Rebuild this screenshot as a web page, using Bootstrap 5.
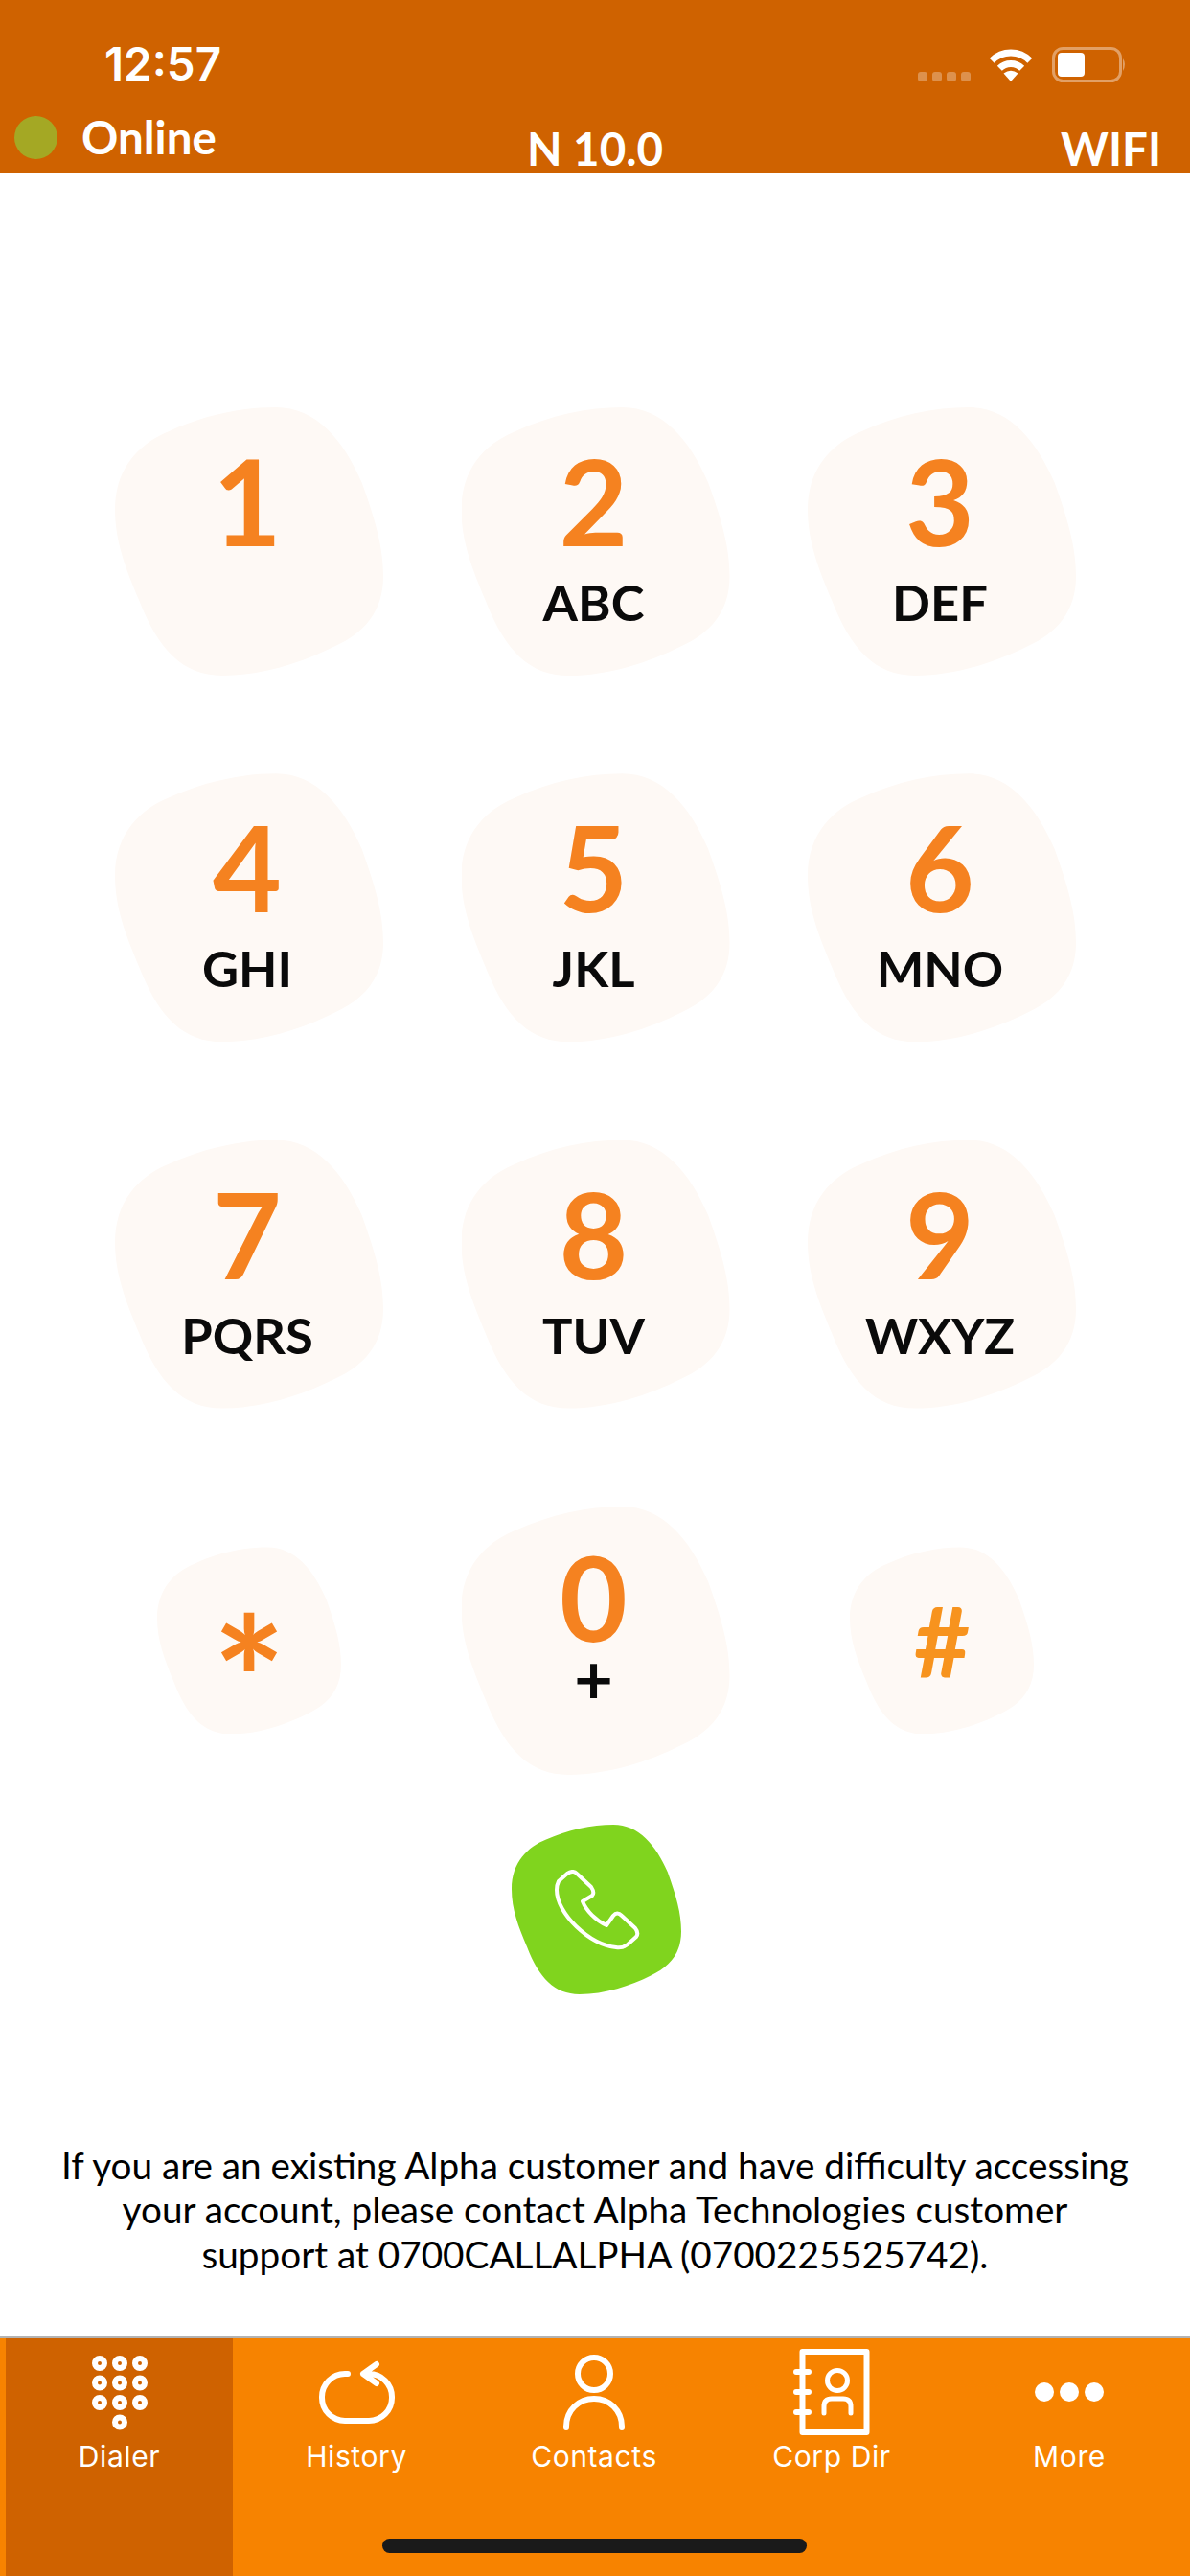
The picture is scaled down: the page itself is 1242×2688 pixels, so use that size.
<!DOCTYPE html>
<html lang="en">
<head>
  <meta charset="UTF-8" />
  <meta name="viewport" content="width=device-width, initial-scale=1.0"/>
  <title>Alpha Dialer</title>
  <link href="https://cdn.jsdelivr.net/npm/bootstrap@5.3.0/dist/css/bootstrap.min.css" rel="stylesheet">
  <style>
    body { font-family: Lato, "Liberation Sans", sans-serif; color: #000; height: 2688px; overflow: hidden; }
    .top-bar { height: 180px; background: #cf6200; color: #fff; }
    .status-row { height: 112px; padding: 44px 56px 0 109px; }
    .clock { font-family: Inter, sans-serif; font-weight: 600; font-size: 47.5px; line-height: 46px; }
    .info-row { height: 68px; padding: 0 30px 0 15px; font-size: 47.5px; font-weight: 700; line-height: 50px; }
    .info-mid { padding-left: 15px; }
    .online-dot { width: 45px; height: 45px; border-radius: 50%; background: #a4a824; margin-right: 25px; }
    .online-wrap { margin-bottom: 12px; }
    .keypad { display: grid; grid-template-columns: repeat(3, 280px); column-gap: 81.5px; row-gap: 102.3px; padding: 245px 0 0 120px; place-items: center; }
    .key { width: 280px; height: 280px; background: #fef9f5; clip-path: url(#blobShape); padding: 35px 4px 0 0; }
    .key-small { width: 192px; height: 195px; padding: 0; }
    .digit { font-size: 124px; line-height: 124px; font-weight: 700; color: #f58220; height: 124px; }
    .digit-zero { font-size: 122px; margin-top: -3px; }
    .letters { font-size: 52.5px; line-height: 52px; font-weight: 700; margin-top: 18px; color: #0a0a0a; }
    .plus-sign { font-size: 70px; line-height: 40px; margin-top: 3px; }
    .star { font-size: 180px; line-height: 180px; font-weight: 700; color: #f58220; height: 104px; }
    .hash { font-size: 101px; line-height: 100px; font-weight: 700; color: #f7931e; }
    .call-btn { width: 177px; height: 177px; background: #80d41e; clip-path: url(#blobShape); margin: 52px 0 0 534px; padding: 2px 0 0 3px; }
    .help-text { font-size: 38.7px; line-height: 46.5px; margin: 0; padding-top: 155px; }
    .tab-bar { height: 250px; background: #f78300; border-top: 2px solid #b3b3b3; padding-right: 2px; margin-top: auto; position: relative; }
    .tab-item { flex: 0 0 248px; color: #fff; padding-top: 6px; font-family: Inter, sans-serif; font-size: 30px; line-height: 36px; letter-spacing: .6px; }
    .tab-on { flex-basis: 237px; margin: 0 5px 0 6px; background: #cf6200; }
    .tab-icon { height: 100px; }
    .tab-label { margin-top: -1px; }
    .home-bar { position: absolute; left: 399px; top: 209px; width: 443px; height: 15px; border-radius: 8px; background: #1a1a1a; }
  </style>
</head>
<body class="d-flex flex-column">
  <svg width="0" height="0" class="position-absolute">
    <defs>
      <clipPath id="blobShape" clipPathUnits="objectBoundingBox">
        <path d="M.6 0C.75 0 .85 .12 .92 .28C.97 .42 1 .52 1 .63C1 .76 .93 .84 .82 .89C.7 .95 .55 1 .4 1C.25 1 .16 .9 .09 .72C.04 .6 0 .5 0 .38C0 .22 .1 .13 .2 .09C.33 .03 .47 0 .6 0Z"/>
      </clipPath>
    </defs>
  </svg>

  <header class="top-bar">
    <div class="status-row d-flex justify-content-between align-items-start">
      <span class="clock">12:57</span>
      <svg width="228" height="44" viewBox="0 0 228 44">
        <g fill="#fff" opacity=".3">
          <rect x="0" y="31" width="10" height="10" rx="3"/>
          <rect x="15" y="31" width="10" height="10" rx="3"/>
          <rect x="30" y="31" width="10" height="10" rx="3"/>
          <rect x="45" y="31" width="10" height="10" rx="3"/>
        </g>
        <g transform="translate(74,6)">
          <path d="M3.2 13.2A28 28 0 0 1 42.8 13.2M11.3 21.3A16.5 16.5 0 0 1 34.7 21.3" fill="none" stroke="#fff" stroke-width="7"/>
          <path d="M23 35L15.5 26.5Q23 21 30.5 26.5Z" fill="#fff"/>
        </g>
        <rect x="141.5" y="6.5" width="70" height="34" rx="10" fill="none" stroke="#fff" stroke-opacity=".4" stroke-width="3"/>
        <rect x="146" y="11" width="28" height="25" rx="4" fill="#fff"/>
        <path d="M214 17Q218 23 214 30Z" fill="#fff" opacity=".4"/>
      </svg>
    </div>
    <div class="info-row row g-0 align-items-end">
      <div class="col-4 d-flex align-items-center online-wrap"><span class="online-dot"></span><span>Online</span></div>
      <div class="col-4 text-center info-mid">N 10.0</div>
      <div class="col-4 text-end">WIFI</div>
    </div>
  </header>

  <main>
    <div class="keypad">
      <div class="key text-center"><div class="digit">1</div></div>
      <div class="key text-center"><div class="digit">2</div><div class="letters">ABC</div></div>
      <div class="key text-center"><div class="digit">3</div><div class="letters">DEF</div></div>
      <div class="key text-center"><div class="digit">4</div><div class="letters">GHI</div></div>
      <div class="key text-center"><div class="digit">5</div><div class="letters">JKL</div></div>
      <div class="key text-center"><div class="digit">6</div><div class="letters">MNO</div></div>
      <div class="key text-center"><div class="digit">7</div><div class="letters">PQRS</div></div>
      <div class="key text-center"><div class="digit">8</div><div class="letters">TUV</div></div>
      <div class="key text-center"><div class="digit">9</div><div class="letters">WXYZ</div></div>
      <div class="key key-small d-flex align-items-center justify-content-center"><div class="star">*</div></div>
      <div class="key text-center"><div class="digit digit-zero">0</div><div class="letters plus-sign">+</div></div>
      <div class="key key-small d-flex align-items-center justify-content-center"><div class="hash">#</div></div>
    </div>

    <div class="call-btn d-flex align-items-center justify-content-center">
      <svg width="90" height="84" viewBox="-1 -1 90 84">
        <path d="M3 11L12 3Q18 -1 22 3L37 17Q41 23 38 26L28 32C32 42 42 52 53 57L60 47Q64 42 69 47L83 60Q87 65 84 69L75 77Q70 81 63 80C35 77 1 45 1 20Q1 15 3 11Z" fill="none" stroke="#fff" stroke-width="4" stroke-linejoin="round"/>
      </svg>
    </div>

    <p class="help-text text-center">If you are an existing Alpha customer and have difficulty accessing<br>your account, please contact Alpha Technologies customer<br>support at 0700CALLALPHA (0700225525742).</p>
  </main>

  <nav class="tab-bar d-flex">
    <div class="tab-item tab-on text-center">
      <div class="tab-icon d-flex align-items-center justify-content-center">
        <svg width="70" height="80" viewBox="0 0 70 80" fill="none" stroke="#fff" stroke-width="6">
          <circle cx="14" cy="10" r="5"/><circle cx="35" cy="10" r="5"/><circle cx="56" cy="10" r="5"/>
          <circle cx="14" cy="30.5" r="5"/><circle cx="35" cy="30.5" r="5"/><circle cx="56" cy="30.5" r="5"/>
          <circle cx="14" cy="51" r="5"/><circle cx="35" cy="51" r="5"/><circle cx="56" cy="51" r="5"/>
          <circle cx="35" cy="71.5" r="5"/>
        </svg>
      </div>
      <div class="tab-label">Dialer</div>
    </div>
    <div class="tab-item text-center">
      <div class="tab-icon d-flex align-items-center justify-content-center">
        <svg width="85" height="72" viewBox="0 0 85 72" fill="none" stroke="#fff" stroke-width="6" stroke-linecap="round" stroke-linejoin="round">
          <path d="M33 17H30A24 24 0 0 0 6 41V42A24 24 0 0 0 30 66H55A24 24 0 0 0 79 42V41A24 24 0 0 0 55 17H49M63 7L49 17L63 27"/>
        </svg>
      </div>
      <div class="tab-label">History</div>
    </div>
    <div class="tab-item text-center">
      <div class="tab-icon d-flex align-items-center justify-content-center">
        <svg width="66" height="82" viewBox="0 0 66 82" fill="none" stroke="#fff" stroke-width="6" stroke-linecap="round">
          <circle cx="33" cy="22" r="17"/>
          <path d="M4 78V77C4 60 17 48 33 48C49 48 62 60 62 77V78"/>
        </svg>
      </div>
      <div class="tab-label">Contacts</div>
    </div>
    <div class="tab-item text-center">
      <div class="tab-icon d-flex align-items-center justify-content-center">
        <svg width="86" height="96" viewBox="0 0 86 96" fill="none" stroke="#fff" stroke-width="6" stroke-linecap="round" stroke-linejoin="round">
          <rect x="12.5" y="6" width="67" height="84"/>
          <path d="M6 27H19M6 48H19M6 69H19"/>
          <circle cx="49" cy="36" r="10.5" stroke-width="5"/>
          <path d="M35 70V63Q35 55 43 55H55Q63 55 63 63V70" stroke-width="5"/>
        </svg>
      </div>
      <div class="tab-label">Corp Dir</div>
    </div>
    <div class="tab-item text-center">
      <div class="tab-icon d-flex align-items-center justify-content-center">
        <svg width="72" height="20" viewBox="0 0 72 20" fill="#fff">
          <circle cx="10" cy="10" r="10"/><circle cx="36" cy="10" r="10"/><circle cx="62" cy="10" r="10"/>
        </svg>
      </div>
      <div class="tab-label">More</div>
    </div>
    <div class="home-bar"></div>
  </nav>
  <script src="https://cdn.jsdelivr.net/npm/bootstrap@5.3.0/dist/js/bootstrap.bundle.min.js"></script>
</body>
</html>
